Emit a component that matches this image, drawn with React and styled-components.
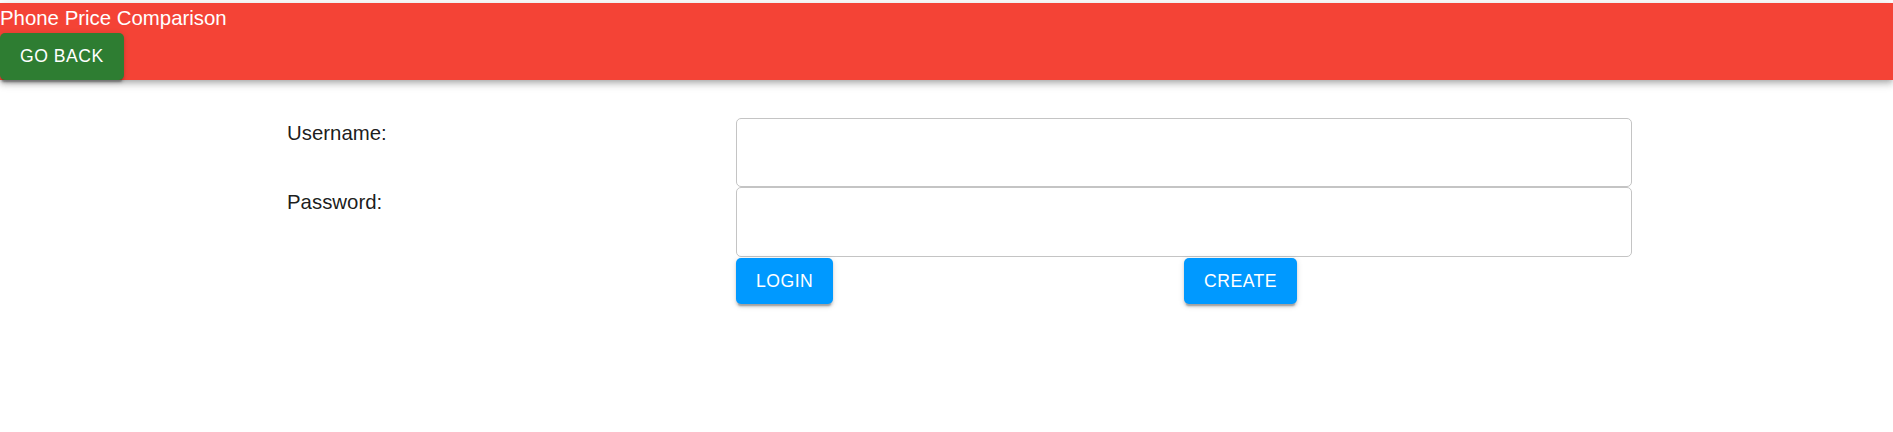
import React from "react";
import styled, { createGlobalStyle } from "styled-components";

const GlobalStyle = createGlobalStyle`
  html, body {
    margin: 0;
    padding: 0;
    background: #ffffff;
    font-family: "Liberation Sans", Arial, Helvetica, sans-serif;
  }
  * { box-sizing: border-box; }
`;

const Page = styled.div`
  padding-top: 3px;
  min-height: 429px;
`;

const AppBar = styled.header`
  display: flex;
  flex-direction: column;
  align-items: flex-start;
  background: #f44336;
  color: #ffffff;
  box-shadow: 0px 2.5px 5px -1.25px rgba(0, 0, 0, 0.2),
    0px 5px 6px 0px rgba(0, 0, 0, 0.14), 0px 1.25px 12.5px 0px rgba(0, 0, 0, 0.12);
`;

const Title = styled.div`
  font-size: 20.4px;
  line-height: 30px;
  font-weight: 400;
`;

const Button = styled.button`
  font-family: "Liberation Sans", Arial, Helvetica, sans-serif;
  font-size: 17.6px;
  font-weight: 500;
  letter-spacing: 0.5px;
  line-height: 30.5px;
  text-transform: uppercase;
  color: #ffffff;
  background: ${(p) => p.$bg};
  border: none;
  border-radius: 5px;
  padding: 8px 20px;
  min-width: 80px;
  cursor: pointer;
  box-shadow: 0px 3.75px 1.25px -2.5px rgba(0, 0, 0, 0.2),
    0px 2.5px 2.5px 0px rgba(0, 0, 0, 0.14), 0px 1.25px 6.25px 0px rgba(0, 0, 0, 0.12);
`;

const Form = styled.form`
  display: grid;
  grid-template-columns: 449px 896px;
  margin: 38px 0 0 287px;
  width: 1345px;
`;

const Label = styled.label`
  font-size: 20.4px;
  line-height: 30px;
  color: rgba(0, 0, 0, 0.9);
`;

const Input = styled.input`
  display: block;
  width: 100%;
  height: 69.5px;
  border: 1px solid #c4c4c4;
  border-radius: 5px;
  padding: 0 17px;
  font-size: 20px;
  font-family: "Liberation Sans", Arial, Helvetica, sans-serif;
  background: #ffffff;
  outline: none;
`;

const Spacer = styled.div``;

const ButtonRow = styled.div`
  display: grid;
  grid-template-columns: 1fr 1fr;
  align-items: start;
  justify-items: start;
  padding-top: 1px;
`;

export default function App() {
  return (
    <>
      <GlobalStyle />
      <Page>
        <AppBar>
          <Title>Phone Price Comparison</Title>
          <Button type="button" $bg="#2e7d32">Go Back</Button>
        </AppBar>
        <Form onSubmit={(e) => e.preventDefault()}>
          <Label htmlFor="username">Username:</Label>
          <Input id="username" type="text" />
          <Label htmlFor="password">Password:</Label>
          <Input id="password" type="password" />
          <Spacer />
          <ButtonRow>
            <Button type="submit" $bg="#0099ff">Login</Button>
            <Button type="button" $bg="#0099ff">Create</Button>
          </ButtonRow>
        </Form>
      </Page>
    </>
  );
}
